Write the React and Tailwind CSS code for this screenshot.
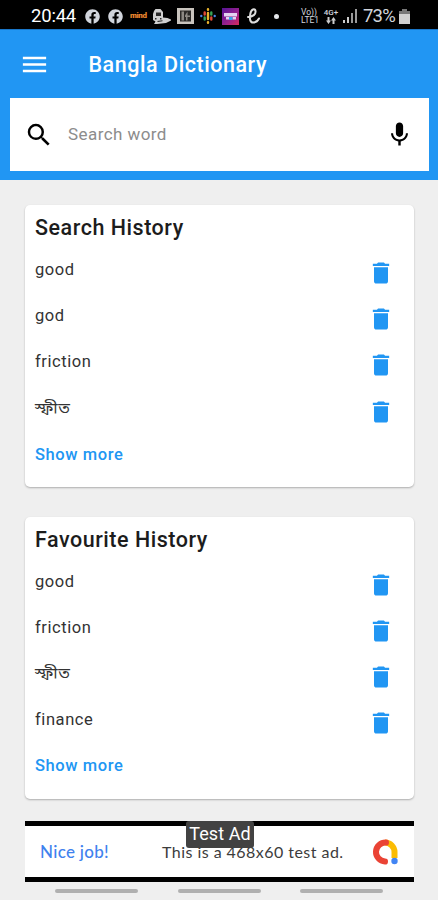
import { MdMenu, MdSearch, MdDelete } from 'react-icons/md';
import { FaFacebook } from 'react-icons/fa';

const searchHistory = ['good', 'god', 'friction', 'স্ফীত'];
const favouriteHistory = ['good', 'friction', 'স্ফীত', 'finance'];

function StatusBar() {
  return (
    <div className="h-[29px] bg-black flex items-center pl-[31px] pt-[3px] text-gray-200">
      <span className="w-[46px] text-[18.5px] leading-none tracking-[-0.2px] text-white">20:44</span>
      <FaFacebook className="ml-[8px] w-[15px] h-[15px] text-gray-300" />
      <FaFacebook className="ml-[8px] w-[15px] h-[15px] text-gray-300" />
      <span className="ml-[7px] w-[17px] text-[8px] leading-none font-black tracking-[-0.4px] text-[#e8862e]">mind</span>
      {/* Train */}
      <svg className="ml-[6px] w-[18px] h-[15px]" viewBox="0 0 18 15">
        <path d="M2.500 0h5L10 3v5.500l4.500.5L18 10.500v1L13 14l-9 1H1l1.500-2.500L0 11V5l1-3z" fill="#d0d0d0" />
        <path d="M3 3.500h5V7H3zM2 9h1.500v1.500H2zM7 9h1.500v1.500H7zM4 12l5.500-.8v1L5 13z" fill="#2a2a2a" />
      </svg>
      {/* News app */}
      <svg className="ml-[6px] w-[17px] h-[16px]" viewBox="0 0 17 16">
        <path d="M0 0h17v16H0z" fill="#c9c4be" />
        <path d="M3 2.500h11v11H3z" fill="#2b2927" />
        <path d="M4.500 3.500h2.500v9H4.500zM8 7.500l2.500-4v4H13v1.500h-2.500v3.500H9V9H8z" fill="#8d8984" />
      </svg>
      {/* Podcasts */}
      <svg className="ml-[6px] w-[16px] h-[16px]" viewBox="0 0 16 16" fill="none" strokeWidth="2.400" strokeLinecap="round">
        <path d="M8 1.200v.6M8 5v6M8 14.200v.6" stroke="#e8b32c" />
        <path d="M4.700 4.500v2M11.300 9.500v2" stroke="#e14a35" />
        <path d="M4.700 9.500v2M11.300 4.500v2" stroke="#38a357" />
        <path d="M1.300 8v.1M14.700 8v.1" stroke="#4b85e8" />
      </svg>
      {/* Promo */}
      <svg className="ml-[6px] w-[17px] h-[17px]" viewBox="0 0 17 17">
        <defs>
          <linearGradient id="promo" x1="0" y1="0" x2="1" y2="1">
            <stop offset="0" stopColor="#551596" />
            <stop offset="0.6" stopColor="#9b218c" />
            <stop offset="1" stopColor="#d82a58" />
          </linearGradient>
        </defs>
        <path d="M0 0h17v17H0z" fill="url(#promo)" />
        <path d="M2 5h13v3.500H2zM4 9h3v2.500H4zM10.500 9H14v2.500h-3.500z" fill="#e3d3f0" />
        <path d="M7 9h3.500v3H7z" fill="#38a4e8" />
      </svg>
      {/* Script e */}
      <svg className="ml-[8px] w-[13px] h-[16px]" viewBox="0 0 13 16" fill="none" stroke="#ddd" strokeWidth="2" strokeLinecap="round">
        <path d="M1 9c5 0 8-3 7.500-6C8 0 4 1 3.300 6 2.500 11 3 14.500 6 14.500c3 0 5-2 6-4" />
      </svg>
      <span className="ml-[14px] w-[5px] h-[5px] rounded-full bg-gray-200" />
      <div className="ml-[22px] w-[19px] text-[8.5px] leading-[8px] text-gray-300">
        <div>Vo))</div>
        <div className="whitespace-nowrap">LTE1</div>
      </div>
      <div className="ml-[3px] w-[16px] text-[8px] leading-[8px] font-medium text-gray-300 text-center">
        <div>4G+</div>
        <svg className="mx-auto w-[10px] h-[7px]" viewBox="0 0 10 7" fill="#ccc">
          <path d="M1.500 0h2v3.500H5L2.500 7 0 3.500h1.500zM7.500 0L10 3.500H8.500V7h-2V3.500H5z" />
        </svg>
      </div>
      <svg className="ml-[4px] w-[14px] h-[14px]" viewBox="0 0 14 14">
        <path d="M0 11h2v3H0zM4 8h2v6H4z" fill="#ccc" />
        <path d="M8 4h2v10H8zM12 0h2v14h-2z" fill="#9a9a9a" />
      </svg>
      <span className="ml-[6px] w-[33px] text-[18.5px] leading-none tracking-[-0.8px] text-gray-300">73%</span>
      <svg className="ml-[3px] w-[11px] h-[15px]" viewBox="0 0 11 15">
        <path d="M3 0h5v2h3v13H0V2h3z" fill="#d0d0d0" />
        <path d="M3 0h5v2h3v3H0V2h3z" fill="#777" />
      </svg>
    </div>
  );
}

function HistoryCard({ title, items }) {
  return (
    <section className="h-[282px] bg-white rounded-[5px] shadow-[0_1px_2px_rgba(0,0,0,0.28)] pl-[10px] pr-[19px] pt-[9px]">
      <h2 className="h-[32px] text-[21.5px] leading-[28px] font-medium tracking-[0.53px] text-[#1c1c1c]">{title}</h2>
      <ul>
        {items.map((word) => (
          <li key={word} className="h-[46.2px] flex items-start justify-between">
            <span className="pt-[13px] text-[16.5px] leading-[22px] tracking-[0.58px] text-[#333]">{word}</span>
            <button className="mt-[13px] text-[#2196f3]">
              <MdDelete className="w-[28px] h-[28px]" />
            </button>
          </li>
        ))}
      </ul>
      <button className="block mt-[13px] text-[16.5px] leading-[22px] font-medium tracking-[0.6px] text-[#2196f3]">
        Show more
      </button>
    </section>
  );
}

function AdBanner() {
  return (
    <div className="relative h-[61px] bg-white border-y-[5.500px] border-black flex items-center pl-[15px] pr-[15.500px] font-[Lato,sans-serif]">
      <span className="w-[122px] text-[17px] font-medium tracking-[0.3px] text-[#3f82ee]">Nice job!</span>
      <span className="flex-1 text-[16px] tracking-[0.46px] whitespace-nowrap text-[#3c3c3c]">This is a 468x60 test ad.</span>
      {/* AdMob */}
      <svg className="w-[26px] h-[26px]" viewBox="0 0 26 26" fill="none" strokeWidth="6" strokeLinecap="round">
        <path d="M13 3.500a9.500 9.500 0 0 1 9.500 9.500v6" stroke="#fbbc04" strokeLinecap="butt" />
        <path d="M14 3.500a9.500 9.500 0 1 0-1 19" stroke="#ea4335" />
        <circle cx="22.500" cy="22" r="3.200" fill="#4285f4" />
      </svg>
      <div className="absolute left-[161px] top-[-5px] w-[68px] h-[27px] rounded-[3px] bg-[#424242] text-white text-center text-[18px] leading-[26px] tracking-[0.1px] font-[Roboto,sans-serif]">
        Test Ad
      </div>
    </div>
  );
}

export default function App() {
  return (
    <div className="w-[438px] h-[900px] overflow-hidden flex flex-col bg-[#efefef] font-[Roboto,'Noto_Sans_Bengali',sans-serif]">
      <StatusBar />
      <header className="h-[151px] bg-[#2196f3] border-t border-[#1976c8]">
        <div className="h-[68px] flex items-center pl-[19px] text-white">
          <MdMenu className="w-[31px] h-[31px]" />
          <h1 className="ml-[38.500px] pt-[2px] text-[21.5px] font-medium tracking-[0.55px]">Bangla Dictionary</h1>
        </div>
        <div className="ml-[10px] mr-[9px] h-[73px] bg-white flex items-center pl-[14px] pr-[15px]">
          <MdSearch className="w-[30px] h-[30px] text-black" />
          <input
            type="text"
            placeholder="Search word"
            className="ml-[14px] flex-1 min-w-0 text-[17px] tracking-[0.43px] placeholder:text-[#8c8c8c] focus:outline-none"
          />
          <svg className="w-[29px] h-[29px]" viewBox="0 0 24 24" fill="#000">
            <path d="M12 14c1.660 0 2.990-1.340 2.990-3L15 5c0-1.660-1.340-3-3-3S9 3.340 9 5v6c0 1.660 1.340 3 3 3zm5.300-3c0 3-2.540 5.100-5.300 5.100S6.700 14 6.700 11H5c0 3.410 2.720 6.230 6 6.720V21h2v-3.280c3.280-.48 6-3.300 6-6.720h-1.700z" />
          </svg>
        </div>
      </header>

      <main className="pt-[25px] pl-[25px] pr-[24.500px]">
        <HistoryCard title="Search History" items={searchHistory} />
        <div className="h-[29.500px]" />
        <HistoryCard title="Favourite History" items={favouriteHistory} />
        <div className="h-[22.500px]" />
        <AdBanner />
      </main>

      {/* Gesture hints */}
      <div className="mt-[7px] pl-[55px] pr-[55px] flex justify-between">
        <span className="w-[83px] h-[4px] rounded-full bg-[#b0b0b0]" />
        <span className="w-[83px] h-[4px] rounded-full bg-[#b0b0b0]" />
        <span className="w-[83px] h-[4px] rounded-full bg-[#b0b0b0]" />
      </div>
    </div>
  );
}
